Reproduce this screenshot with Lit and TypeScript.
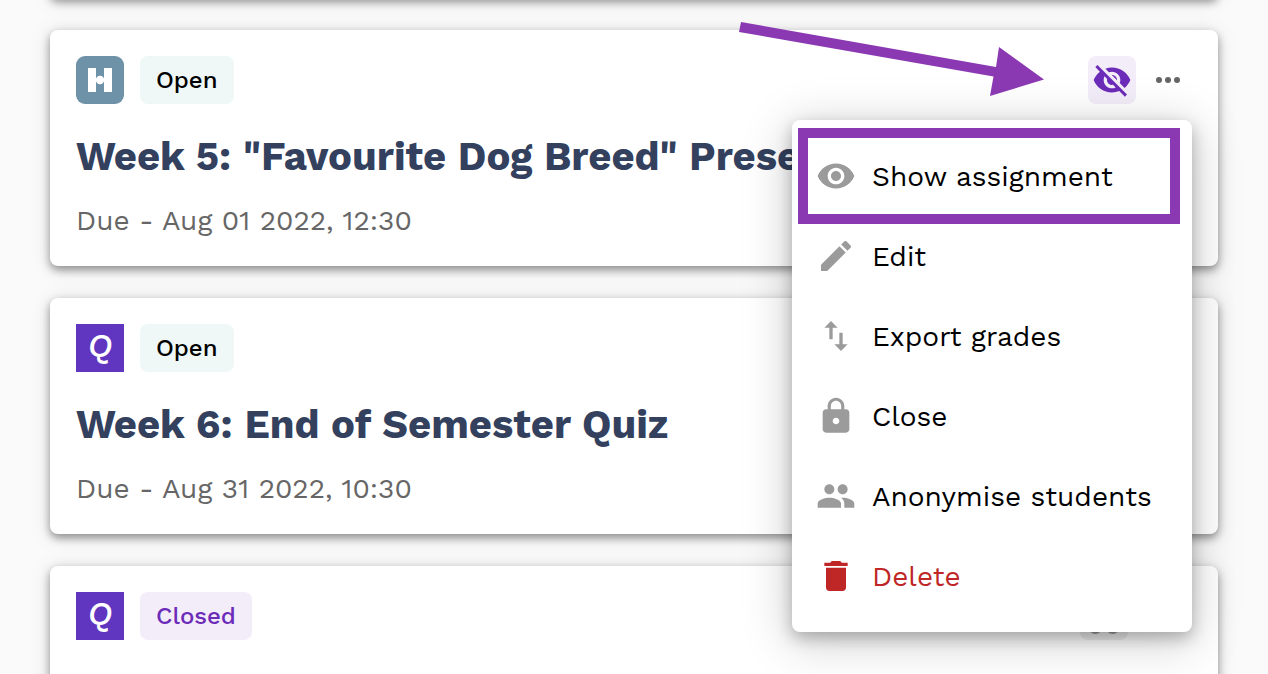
import { LitElement, html, css, svg, nothing } from "lit";
import { customElement, property } from "lit/decorators.js";

const ICONS: Record<string, unknown> = {
  eye: svg`<path d="M12 4.5C7 4.5 2.73 7.61 1 12c1.73 4.39 6 7.5 11 7.5s9.27-3.11 11-7.5c-1.73-4.39-6-7.5-11-7.5zM12 17c-2.76 0-5-2.24-5-5s2.24-5 5-5 5 2.240 5 5-2.24 5-5 5zm0-8c-1.66 0-3 1.34-3 3s1.340 3 3 3 3-1.340 3-3-1.340-3-3-3z"/>`,
  eyeOff: svg`<path d="M12 7c2.76 0 5 2.24 5 5 0 .65-.13 1.26-.36 1.83l2.920 2.920c1.510-1.260 2.700-2.890 3.430-4.750-1.730-4.390-6-7.500-11-7.500-1.400 0-2.740.25-3.980.7l2.160 2.160C10.740 7.130 11.350 7 12 7zM2 4.270l2.280 2.280.46.46C3.080 8.300 1.780 10.020 1 12c1.730 4.390 6 7.500 11 7.500 1.550 0 3.030-.3 4.380-.84l.42.42L19.730 22 21 20.730 3.270 3 2 4.270zM7.530 9.800l1.550 1.550c-.05.21-.08.43-.08.65 0 1.660 1.340 3 3 3 .22 0 .44-.03.65-.08l1.550 1.550c-.67.33-1.410.53-2.200.53-2.760 0-5-2.240-5-5 0-.79.2-1.530.53-2.200zm4.310-.78l3.150 3.150.02-.16c0-1.660-1.340-3-3-3l-.17.01z"/>`,
  edit: svg`<path d="M3 17.250V21h3.750L17.810 9.940l-3.750-3.750L3 17.250zM20.710 7.040c.39-.39.39-1.020 0-1.410l-2.340-2.340c-.39-.39-1.020-.39-1.410 0l-1.830 1.830 3.750 3.750 1.830-1.830z"/>`,
  export: svg`<path d="M16 17.010V10h-2v7.010h-3L15 21l4-3.990h-3zM9 3L5 6.990h3V14h2V6.990h3L9 3z"/>`,
  lock: svg`<path d="M18 8h-1V6c0-2.760-2.240-5-5-5S7 3.240 7 6v2H6c-1.100 0-2 .9-2 2v10c0 1.100.9 2 2 2h12c1.100 0 2-.9 2-2V10c0-1.100-.9-2-2-2zm-6 9c-1.100 0-2-.9-2-2s.9-2 2-2 2 .9 2 2-.9 2-2 2zm3.100-9H8.900V6c0-1.710 1.390-3.100 3.100-3.100 1.710 0 3.100 1.390 3.100 3.100v2z"/>`,
  people: svg`<path d="M16 11c1.660 0 2.990-1.340 2.990-3S17.660 5 16 5s-3 1.340-3 3 1.340 3 3 3zm-8 0c1.660 0 2.990-1.340 2.990-3S9.660 5 8 5 5 6.340 5 8s1.340 3 3 3zm0 2c-2.330 0-7 1.170-7 3.500V19h14v-2.500c0-2.330-4.670-3.500-7-3.500zm8 0c-.29 0-.62.02-.97.05 1.160.84 1.970 1.970 1.970 3.450V19h6v-2.500c0-2.330-4.670-3.500-7-3.500z"/>`,
  trash: svg`<path d="M6 19c0 1.100.9 2 2 2h8c1.100 0 2-.9 2-2V7H6v12zM19 4h-3.500l-1-1h-5l-1 1H5v2h14V4z"/>`,
  more: svg`<circle cx="6" cy="12" r="2"/><circle cx="12" cy="12" r="2"/><circle cx="18" cy="12" r="2"/>`,
  incognito: svg`<path d="M17.500 2l-2.800.8L12 3l-2.700-.2L6.500 2 5 9h14l-1.500-7zM2 10.500h20V12H2z"/><g fill="none" stroke="currentColor" stroke-width="2"><circle cx="6.800" cy="18.700" r="3.100"/><circle cx="17.200" cy="18.700" r="3.100"/><path d="M10 18q2-1.500 4 0"/></g>`,
};

@customElement("ui-icon")
class UiIcon extends LitElement {
  @property() name = "";
  static styles = css`
    :host { display: block; flex: none; width: 40px; height: 40px; }
    svg { display: block; width: 100%; height: 100%; fill: currentColor; }
  `;
  render() {
    return html`<svg viewBox="0 0 24 24" aria-hidden="true">${ICONS[this.name]}</svg>`;
  }
}

@customElement("assignment-menu")
class AssignmentMenu extends LitElement {
  static styles = css`
    :host {
      display: block;
      box-sizing: border-box;
      width: 400px;
      padding: 16px 0;
      border-radius: 8px;
      background: #fff;
      box-shadow: 0 6px 16px rgba(0, 0, 0, 0.26), 0 8px 48px 4px rgba(0, 0, 0, 0.18);
    }
    .item {
      position: relative;
      display: flex;
      align-items: center;
      gap: 16px;
      width: 100%;
      height: 80px;
      padding: 0 24px;
      border: 0;
      background: none;
      color: #000;
      font: inherit;
      font-size: 28px;
      text-align: left;
      white-space: nowrap;
      cursor: pointer;
    }
    .item ui-icon { color: #9b9b9b; }
    .danger, .item.danger ui-icon { color: #bf2626; }
    .highlight {
      position: absolute;
      inset: -8px 12px -8px 6px;
      border: 10px solid #8b39b3;
      pointer-events: none;
    }
  `;
  items = [
    { icon: "eye", label: "Show assignment", highlight: true },
    { icon: "edit", label: "Edit" },
    { icon: "export", label: "Export grades" },
    { icon: "lock", label: "Close" },
    { icon: "people", label: "Anonymise students" },
    { icon: "trash", label: "Delete", danger: true },
  ];
  render() {
    return this.items.map(
      (i) => html`<button type="button" class="item ${i.danger ? "danger" : ""}">
        <ui-icon name=${i.icon}></ui-icon><span>${i.label}</span>
        ${i.highlight ? html`<span class="highlight"></span>` : nothing}
      </button>`
    );
  }
}

@customElement("assignment-card")
class AssignmentCard extends LitElement {
  @property() logo = "";
  @property() status = "";
  @property() heading = "";
  @property() due = "";
  @property() flag = "";
  @property({ type: Boolean }) menu = false;
  static styles = css`
    :host {
      display: block;
      position: relative;
      box-sizing: border-box;
      min-height: 236px;
      padding: 26px 26px 24px;
      border-radius: 8px;
      background: #fff;
      box-shadow: 0 4px 8px rgba(0, 0, 0, 0.38), 0 2px 20px rgba(0, 0, 0, 0.13);
    }
    :host([menu]) { z-index: 1; }
    .top { display: flex; align-items: center; gap: 16px; margin-bottom: 28px; }
    .logo { display: block; width: 48px; height: 48px; }
    .badge {
      height: 48px;
      padding: 0 16px;
      border-radius: 8px;
      background: #eff8f7;
      color: #000;
      font-size: 24px;
      font-weight: 500;
      line-height: 48px;
    }
    .closed { background: #f3edf9; color: #6c2bb8; }
    .actions { display: flex; gap: 8px; margin-left: auto; }
    .spaced { gap: 16px; }
    .action {
      display: grid;
      place-items: center;
      width: 48px;
      height: 48px;
      padding: 0;
      border: 0;
      border-radius: 8px;
      background: none;
      color: #666;
      cursor: pointer;
    }
    .hidden { background: #f3edf9; color: #6c2bb8; }
    .anonymous { background: #f0f0f0; color: #999; }
    .more ui-icon { width: 36px; height: 36px; }
    .title {
      margin: 0 0 18px;
      overflow: hidden;
      color: #33415e;
      font-size: 40px;
      font-weight: 700;
      line-height: 50px;
      text-overflow: ellipsis;
      white-space: nowrap;
    }
    .due { margin: 0; color: #666; font-size: 28px; line-height: 42px; }
    .popup { position: absolute; top: 90px; right: 26px; }
    .letter { font-size: 34px; font-style: italic; font-weight: 500; }
  `;
  renderLogo() {
    if (this.logo === "H")
      return html`<svg class="logo" viewBox="0 0 48 48" role="img" aria-label="Presentation">
        <rect width="48" height="48" rx="9" fill="#6e93a8" />
        <rect x="12" y="12" width="8" height="24" fill="#fff" />
        <rect x="28" y="12" width="8" height="24" fill="#fff" />
        <circle cx="24" cy="24" r="4.200" fill="#fff" />
      </svg>`;
    return html`<svg class="logo" viewBox="0 0 48 48" role="img" aria-label="Quiz">
      <rect width="48" height="48" fill="#6035bf" />
      <text class="letter" x="24" y="33" text-anchor="middle" fill="#fff">Q</text>
    </svg>`;
  }
  render() {
    return html`
      <div class="top">
        ${this.renderLogo()}
        <span class="badge ${this.status === "Closed" ? "closed" : ""}">${this.status}</span>
        <div class="actions ${this.flag === "anonymous" ? "spaced" : ""}">
          ${this.flag
            ? html`<button type="button" class="action ${this.flag}" aria-label=${this.flag}>
                <ui-icon name=${this.flag === "hidden" ? "eyeOff" : "incognito"}></ui-icon>
              </button>`
            : nothing}
          <button type="button" class="action more" aria-label="More actions">
            <ui-icon name="more"></ui-icon>
          </button>
        </div>
      </div>
      ${this.heading ? html`<h2 class="title">${this.heading}</h2>` : nothing}
      ${this.due ? html`<p class="due">Due - ${this.due}</p>` : nothing}
      ${this.menu ? html`<assignment-menu class="popup"></assignment-menu>` : nothing}
    `;
  }
}

@customElement("app-root")
class AppRoot extends LitElement {
  static styles = css`
    :host {
      display: block;
      position: relative;
      height: 100vh;
      overflow: hidden;
      background: #fafafa;
      font-family: "Work Sans", Inter, sans-serif;
    }
    .list { display: flex; flex-direction: column; gap: 32px; padding: 0 50px; }
    .previous {
      height: 14px;
      margin-top: -16px;
      border-radius: 8px;
      background: #fff;
      box-shadow: 0 4px 8px rgba(0, 0, 0, 0.38), 0 2px 20px rgba(0, 0, 0, 0.13);
    }
    .arrow {
      position: absolute;
      top: 20px;
      right: 224px;
      z-index: 2;
      width: 306px;
      height: 78px;
      fill: #8b39b3;
      pointer-events: none;
    }
  `;
  render() {
    return html`
      <main class="list">
        <div class="previous"></div>
        <assignment-card logo="H" status="Open" flag="hidden" menu
          heading='Week 5: "Favourite Dog Breed" Presentation' due="Aug 01 2022, 12:30"></assignment-card>
        <assignment-card logo="Q" status="Open"
          heading="Week 6: End of Semester Quiz" due="Aug 31 2022, 10:30"></assignment-card>
        <assignment-card logo="Q" status="Closed" flag="anonymous"></assignment-card>
      </main>
      <svg class="arrow" viewBox="738 20 306 78" aria-hidden="true">
        <path d="M741 22L996 67L999 47L1044 79.500L990 96L993.500 76.500L739 32z" />
      </svg>
    `;
  }
}
